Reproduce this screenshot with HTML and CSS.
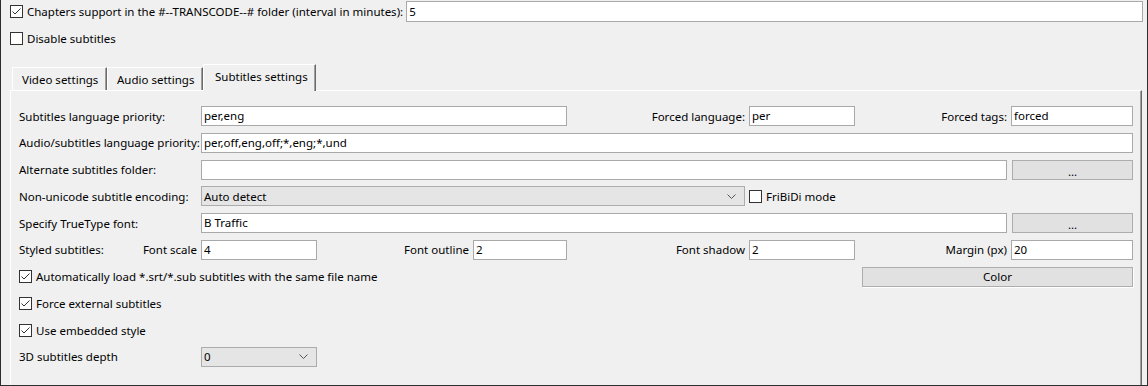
FILE: index.html
```html
<!DOCTYPE html>
<html lang="en">
<head>
  <meta charset="UTF-8">
  <title>Subtitles settings</title>
  <link rel="stylesheet" href="styles.css">
</head>
<body>
  <div class="window">
    <div class="top-row">
      <label class="check">
        <span class="box"><svg viewBox="0 0 11 11"><polyline points="1.5,5.5 4,8 9.5,2.5"/></svg></span>
        Chapters support in the #--TRANSCODE--# folder (interval in minutes):
      </label>
      <div class="field grow">5</div>
    </div>

    <div class="second-row">
      <label class="check"><span class="box"></span>Disable subtitles</label>
    </div>

    <div class="tabs">
      <div class="tab">Video settings</div>
      <div class="tab">Audio settings</div>
      <div class="tab active">Subtitles settings</div>
    </div>

    <div class="panel">
      <div class="form">
        <span class="lbl">Subtitles language priority:</span>
        <div class="field c2-4">per,eng</div>
        <span class="lbl right">Forced language:</span>
        <div class="field">per</div>
        <span class="lbl right">Forced tags:</span>
        <div class="field">forced</div>

        <span class="lbl">Audio/subtitles language priority:</span>
        <div class="field c2-8">per,off,eng,off;*,eng;*,und</div>

        <span class="lbl">Alternate subtitles folder:</span>
        <div class="field c2-7"></div>
        <div class="btn dots">...</div>

        <span class="lbl">Non-unicode subtitle encoding:</span>
        <div class="combo c2-5">Auto detect<svg viewBox="0 0 9 5"><polyline points="0.5,0.5 4.5,4.5 8.5,0.5"/></svg></div>
        <label class="check c6-8"><span class="box"></span>FriBiDi mode</label>

        <span class="lbl">Specify TrueType font:</span>
        <div class="field c2-7">B Traffic</div>
        <div class="btn dots">...</div>

        <div class="lbl split"><span>Styled subtitles:</span><span>Font scale</span></div>
        <div class="field">4</div>
        <span class="lbl right">Font outline</span>
        <div class="field">2</div>
        <span class="lbl right">Font shadow</span>
        <div class="field">2</div>
        <span class="lbl right">Margin (px)</span>
        <div class="field">20</div>

        <label class="check c1-6">
          <span class="box"><svg viewBox="0 0 11 11"><polyline points="1.5,5.5 4,8 9.5,2.5"/></svg></span>
          Automatically load *.srt/*.sub subtitles with the same file name
        </label>
        <div class="btn color c7-8">Color</div>

        <label class="check c1-8">
          <span class="box"><svg viewBox="0 0 11 11"><polyline points="1.5,5.5 4,8 9.5,2.5"/></svg></span>
          Force external subtitles
        </label>

        <label class="check c1-8">
          <span class="box"><svg viewBox="0 0 11 11"><polyline points="1.5,5.5 4,8 9.5,2.5"/></svg></span>
          Use embedded style
        </label>

        <span class="lbl">3D subtitles depth</span>
        <div class="combo">0<svg viewBox="0 0 9 5"><polyline points="0.5,0.5 4.5,4.5 8.5,0.5"/></svg></div>
      </div>
    </div>
  </div>
</body>
</html>
```

FILE: styles.css
```css
html, body {
  margin: 0;
  padding: 0;
}
body {
  font-family: "Noto Sans", "Open Sans", sans-serif;
  font-size: 11.5px;
  color: #000;
  background-color: #f0f0f0;
}
.window {
  box-sizing: border-box;
  width: 1148px;
  height: 386px;
  padding: 1px 4px 0 9px;
  border: 1px solid #2e2e2e;
  border-top: none;
  display: flex;
  flex-direction: column;
  overflow: hidden;
}
.top-row {
  display: flex;
  align-items: center;
  height: 21px;
  gap: 3px;
}
.second-row {
  display: flex;
  align-items: center;
  height: 20px;
  margin-top: 6px;
}
.check {
  display: flex;
  align-items: center;
  gap: 4px;
  white-space: nowrap;
}
.box {
  box-sizing: border-box;
  width: 13px;
  height: 13px;
  flex: none;
  border: 1px solid #333;
  background-color: #fff;
  display: flex;
}
.box svg {
  width: 11px;
  height: 11px;
  fill: none;
  stroke: #333;
  stroke-width: 1;
}
.field {
  box-sizing: border-box;
  height: 20px;
  line-height: 18px;
  padding: 0 2px;
  border: 1px solid #a9a9a9;
  background-color: #fff;
  white-space: nowrap;
  overflow: hidden;
}
.top-row .field {
  height: 21px;
  line-height: 19px;
}
.grow {
  flex: 1;
}
.tabs {
  display: flex;
  align-items: flex-end;
  height: 26px;
  margin-top: 16px;
  margin-left: 2px;
  position: relative;
  z-index: 1;
}
.tab {
  box-sizing: border-box;
  height: 23px;
  padding: 0 0 0 9px;
  line-height: 24px;
  white-space: nowrap;
  border-top: 1px solid #fff;
  border-left: 1px solid #fff;
  border-right: 1px solid #696969;
  box-shadow: inset -1px 0 #a0a0a0;
  background-color: #f0f0f0;
}
.tab:nth-child(1) {
  width: 95px;
}
.tab:nth-child(2) {
  width: 96px;
}
.tab.active {
  width: 113px;
  height: 27px;
  margin-bottom: -1px;
  line-height: 24px;
  padding-left: 11px;
}
.panel {
  flex: 1;
  margin-right: 1px;
  padding: 15px 8px 0 8px;
  border-top: 1px solid #fff;
  border-left: 1px solid #fff;
  border-right: 1px solid #696969;
  box-shadow: inset -1px 0 #a0a0a0;
}
.form {
  display: grid;
  grid-template-columns: 178px 116px 148px 94px 174px 106px 148px 122px;
  grid-auto-rows: 20px;
  column-gap: 4px;
  row-gap: 6.78px;
}
.lbl {
  display: flex;
  align-items: center;
  white-space: nowrap;
}
.lbl.right {
  justify-content: flex-end;
}
.lbl.split {
  justify-content: space-between;
}
.c2-4 { grid-column: 2 / 5; }
.c2-5 { grid-column: 2 / 6; }
.c2-7 { grid-column: 2 / 8; }
.c2-8 { grid-column: 2 / 9; }
.c6-8 { grid-column: 6 / 9; }
.c1-6 { grid-column: 1 / 7; }
.c1-8 { grid-column: 1 / 9; }
.c7-8 { grid-column: 7 / 9; margin-left: 3px; }
.combo {
  box-sizing: border-box;
  height: 20px;
  padding: 0 8px 0 2px;
  border: 1px solid #acacac;
  background-color: #e5e5e5;
  display: flex;
  align-items: center;
  justify-content: space-between;
}
.combo svg {
  width: 9px;
  height: 5px;
  fill: none;
  stroke: #555;
  stroke-width: 1;
}
.btn {
  box-sizing: border-box;
  height: 20px;
  border: 1px solid #adadad;
  background-color: #e1e1e1;
  display: flex;
  align-items: center;
  justify-content: center;
}
.dots {
  margin-left: 1px;
  padding-top: 3px;
}
.color {
  box-shadow: 1px 1px 0 #fff;
}
```
